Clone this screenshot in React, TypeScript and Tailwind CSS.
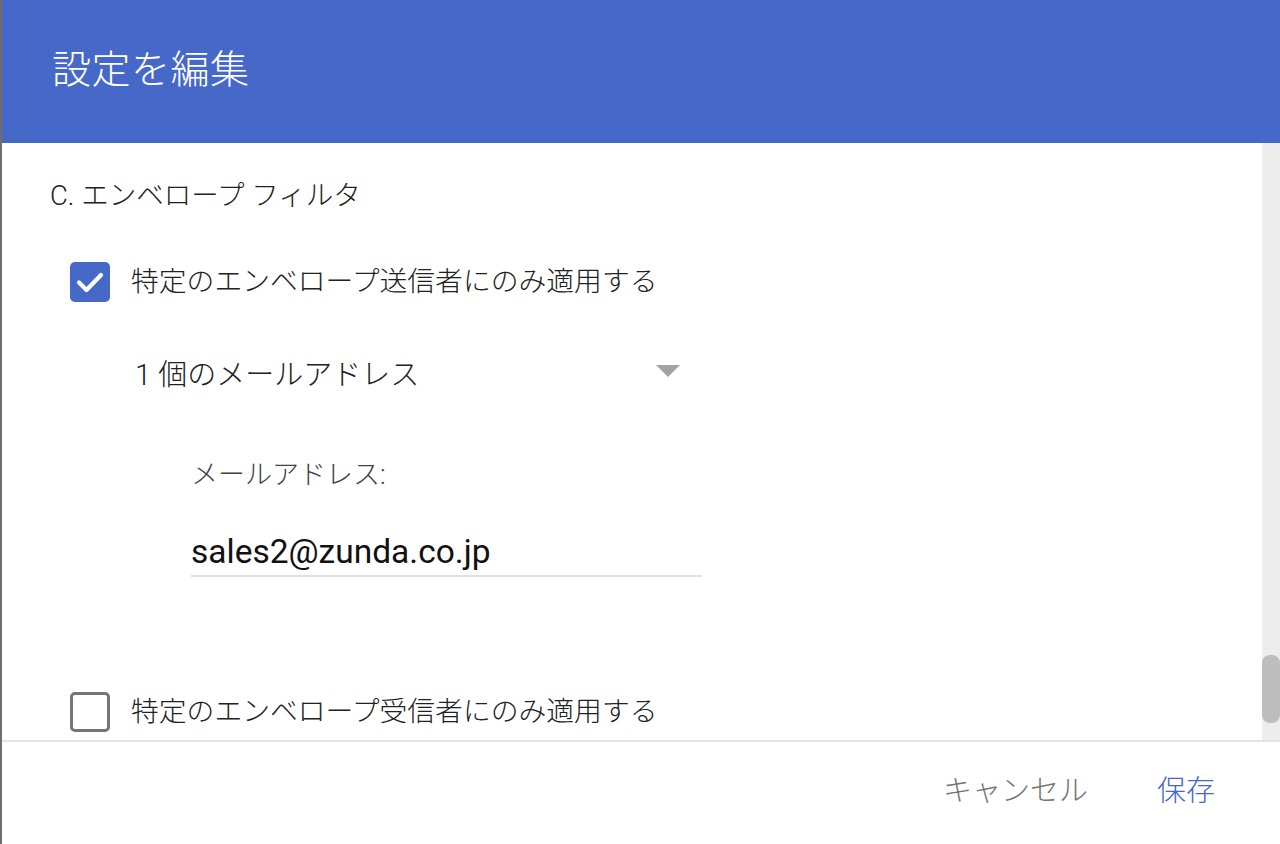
import React from "react";

const font = { fontFamily: '"Roboto", "Noto Sans CJK JP", sans-serif' };

function CheckedBox() {
  return (
    <div className="w-[40px] h-[40px] rounded-[5px] bg-[#4668c8] shrink-0">
      <svg width="40" height="40" viewBox="0 0 40 40" fill="none">
        <path d="M9 20.5l7.5 7.5L31 13" stroke="#fff" strokeWidth="4.2" strokeLinecap="round" strokeLinejoin="round" />
      </svg>
    </div>
  );
}

function UncheckedBox() {
  return <div className="w-[40px] h-[40px] rounded-[5px] border-[3px] border-[#757575] bg-white shrink-0" />;
}

export default function App() {
  return (
    <div className="w-[1280px] h-[844px] flex overflow-hidden bg-white font-light" style={font}>
      <div className="w-[2px] h-full bg-[#6e6e6e] shrink-0" />
      <div className="flex-1 flex flex-col">
        <div className="h-[143px] bg-[#4668c8] flex items-center pl-[50px] pb-[2px] shrink-0">
          <span className="text-white text-[39px] leading-none tracking-[0.5px]">設定を編集</span>
        </div>
        <div className="flex-1 flex min-h-0">
          <div className="flex-1 flex flex-col overflow-hidden pl-[48px]">
            <div className="h-[40px] mt-[33px] flex items-center text-[#212121] text-[27.5px]">
              C. エンベロープ フィルタ
            </div>
            <div className="h-[40px] mt-[46px] flex items-center ml-[20px] gap-[21px]">
              <CheckedBox />
              <span className="text-[27.8px] text-[#212121]">特定のエンベロープ送信者にのみ適用する</span>
            </div>
            <div className="h-[40px] mt-[54px] flex items-center justify-between ml-[85px] w-[545px]">
              <span className="text-[29px] text-[#212121]">1 個のメールアドレス</span>
              <svg width="24" height="12" viewBox="0 0 24 12" className="mb-[10px]">
                <path d="M0 0h24L12 12z" fill="#a3a3a3" />
              </svg>
            </div>
            <div className="h-[40px] mt-[59px] flex items-center ml-[141px] text-[27px] text-[#424242]">
              メールアドレス:
            </div>
            <div className="h-[44px] mt-[38px] ml-[141px] w-[511px] border-b-2 border-[#e0e0e0] flex items-center pb-[4px]">
              <span className="text-[33.5px] text-[#111] font-normal">sales2@zunda.co.jp</span>
            </div>
            <div className="h-[40px] mt-[115px] flex items-center ml-[20px] gap-[21px]">
              <UncheckedBox />
              <span className="text-[27.8px] text-[#212121]">特定のエンベロープ受信者にのみ適用する</span>
            </div>
          </div>
          <div className="w-[18px] bg-[#ededed] flex flex-col justify-end pb-[17px] shrink-0">
            <div className="h-[68px] w-full rounded-[8px] bg-[#bdbdbd]" />
          </div>
        </div>
        <div className="h-[2px] bg-[#e3e3e3] shrink-0" />
        <div className="h-[102px] flex items-center justify-end pr-[65px] gap-[69px] shrink-0 pb-[2px]">
          <span className="text-[29px] text-[#757575]">キャンセル</span>
          <span className="text-[29px] text-[#4668c8]">保存</span>
        </div>
      </div>
    </div>
  );
}
